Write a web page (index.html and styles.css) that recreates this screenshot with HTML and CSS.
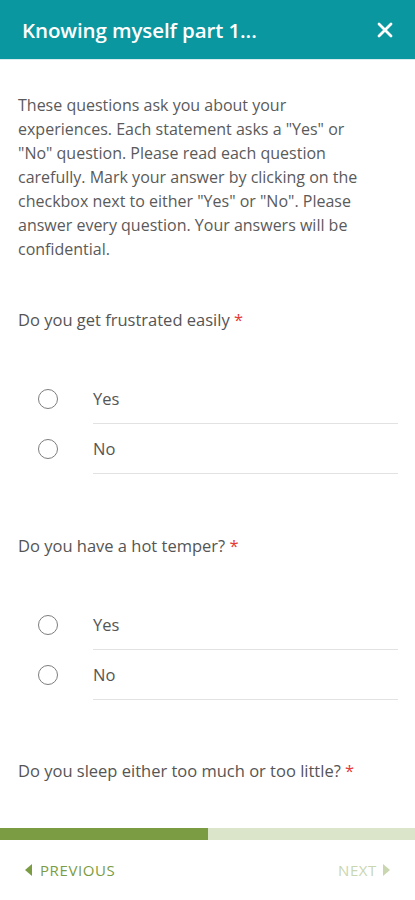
FILE: index.html
```html
<!DOCTYPE html>
<html lang="en">
<head>
    <meta charset="UTF-8">
    <meta name="viewport" content="width=device-width, initial-scale=1.0">
    <title>Knowing myself part 1</title>
    <link rel="stylesheet" href="styles.css">
</head>
<body>
<div class="screen">

    <!-- Barra superior -->
    <header class="topbar">
        <h1 class="topbar-title">Knowing myself part 1...</h1>
        <svg class="close" width="16" height="16" viewBox="0 0 16 16">
            <path d="M2 2 L14 14 M14 2 L2 14" stroke="#fff" stroke-width="2.8" stroke-linecap="round"/>
        </svg>
    </header>

    <main class="content">
        <p class="intro">These questions ask you about your experiences. Each statement asks a "Yes" or "No" question. Please read each question carefully. Mark your answer by clicking on the checkbox next to either "Yes" or "No". Please answer every question. Your answers will be confidential.</p>

        <div class="question">
            <p class="question-text">Do you get frustrated easily <span class="req">*</span></p>
            <div class="options">
                <label class="option"><span class="radio"></span><span class="option-label">Yes</span></label>
                <label class="option"><span class="radio"></span><span class="option-label">No</span></label>
            </div>
        </div>

        <div class="question">
            <p class="question-text">Do you have a hot temper? <span class="req">*</span></p>
            <div class="options">
                <label class="option"><span class="radio"></span><span class="option-label">Yes</span></label>
                <label class="option"><span class="radio"></span><span class="option-label">No</span></label>
            </div>
        </div>

        <div class="question">
            <p class="question-text">Do you sleep either too much or too little? <span class="req">*</span></p>
        </div>
    </main>

    <!-- Progresso -->
    <div class="progress"><div class="progress-fill" style="width: 50%;"></div></div>

    <footer class="nav">
        <a href="#" class="nav-btn prev"><span class="tri tri-left"></span>PREVIOUS</a>
        <a href="#" class="nav-btn next">NEXT<span class="tri tri-right"></span></a>
    </footer>

</div>
</body>
</html>
```

FILE: styles.css
```css
* {
    margin: 0;
    padding: 0;
    box-sizing: border-box;
}
body, html {
    height: 100%;
    font-family: "Open Sans", Arial, sans-serif;
    background: #fff;
}
.screen {
    display: flex;
    flex-direction: column;
    height: 900px;
}

/* Barra superior */
.topbar {
    height: 60px;
    flex-shrink: 0;
    background-color: #0a97a0;
    display: flex;
    align-items: center;
    justify-content: space-between;
    padding: 0 22px 0 22px;
    border-bottom: 1px solid #d9ecee;
}
.topbar-title {
    color: #fff;
    font-size: 20.5px;
    font-weight: 600;
    letter-spacing: -0.1px;
}
.close {
    display: block;
    margin-right: 0;
}

/* Conteudo */
.content {
    flex: 1;
    overflow: hidden;
    padding: 33px 17px 0 18px;
    color: #555;
}
.intro {
    font-size: 16px;
    line-height: 24px;
    color: #5a5a5a;
    padding-right: 19px; /* quebra de linha igual a do app */
}
.question {
    margin-top: 47px;
}
.question + .question {
    margin-top: 60px;
}
.question:last-child {
    margin-top: 59px;
}
.question-text {
    font-size: 16.5px;
    line-height: 24px;
    color: #555;
}
.req {
    color: #e53935;
}
.options {
    margin-top: 42px;
}
.option {
    display: flex;
    align-items: stretch;
    height: 50px;
}
.radio {
    width: 20px;
    height: 20px;
    border: 1.6px solid #7d7d7d;
    border-radius: 50%;
    margin: 15px 0 0 20px;
    flex-shrink: 0;
}
.option-label {
    flex: 1;
    margin-left: 35px;
    font-size: 16.5px;
    line-height: 49px;
    color: #555;
    border-bottom: 1px solid #e2e2e2;
}

/* Barra de progresso */
.progress {
    height: 12px;
    flex-shrink: 0;
    background-color: #dbe5ca;
}
.progress-fill {
    height: 100%;
    background-color: #7b9c42;
}

/* Navegacao */
.nav {
    height: 60px;
    flex-shrink: 0;
    display: flex;
    align-items: center;
    justify-content: space-between;
    padding: 0 25px 0 25px;
}
.nav-btn {
    display: flex;
    align-items: center;
    font-size: 15px;
    letter-spacing: 0.6px;
    text-decoration: none;
}
.prev {
    color: #7b9c42;
}
.next {
    color: #c9d6b0;
}
.tri {
    width: 0;
    height: 0;
    border-top: 6px solid transparent;
    border-bottom: 6px solid transparent;
}
.tri-left {
    border-right: 7px solid #7b9c42;
    margin-right: 8px;
}
.tri-right {
    border-left: 7px solid #c9d6b0;
    margin-left: 6px;
}
```
